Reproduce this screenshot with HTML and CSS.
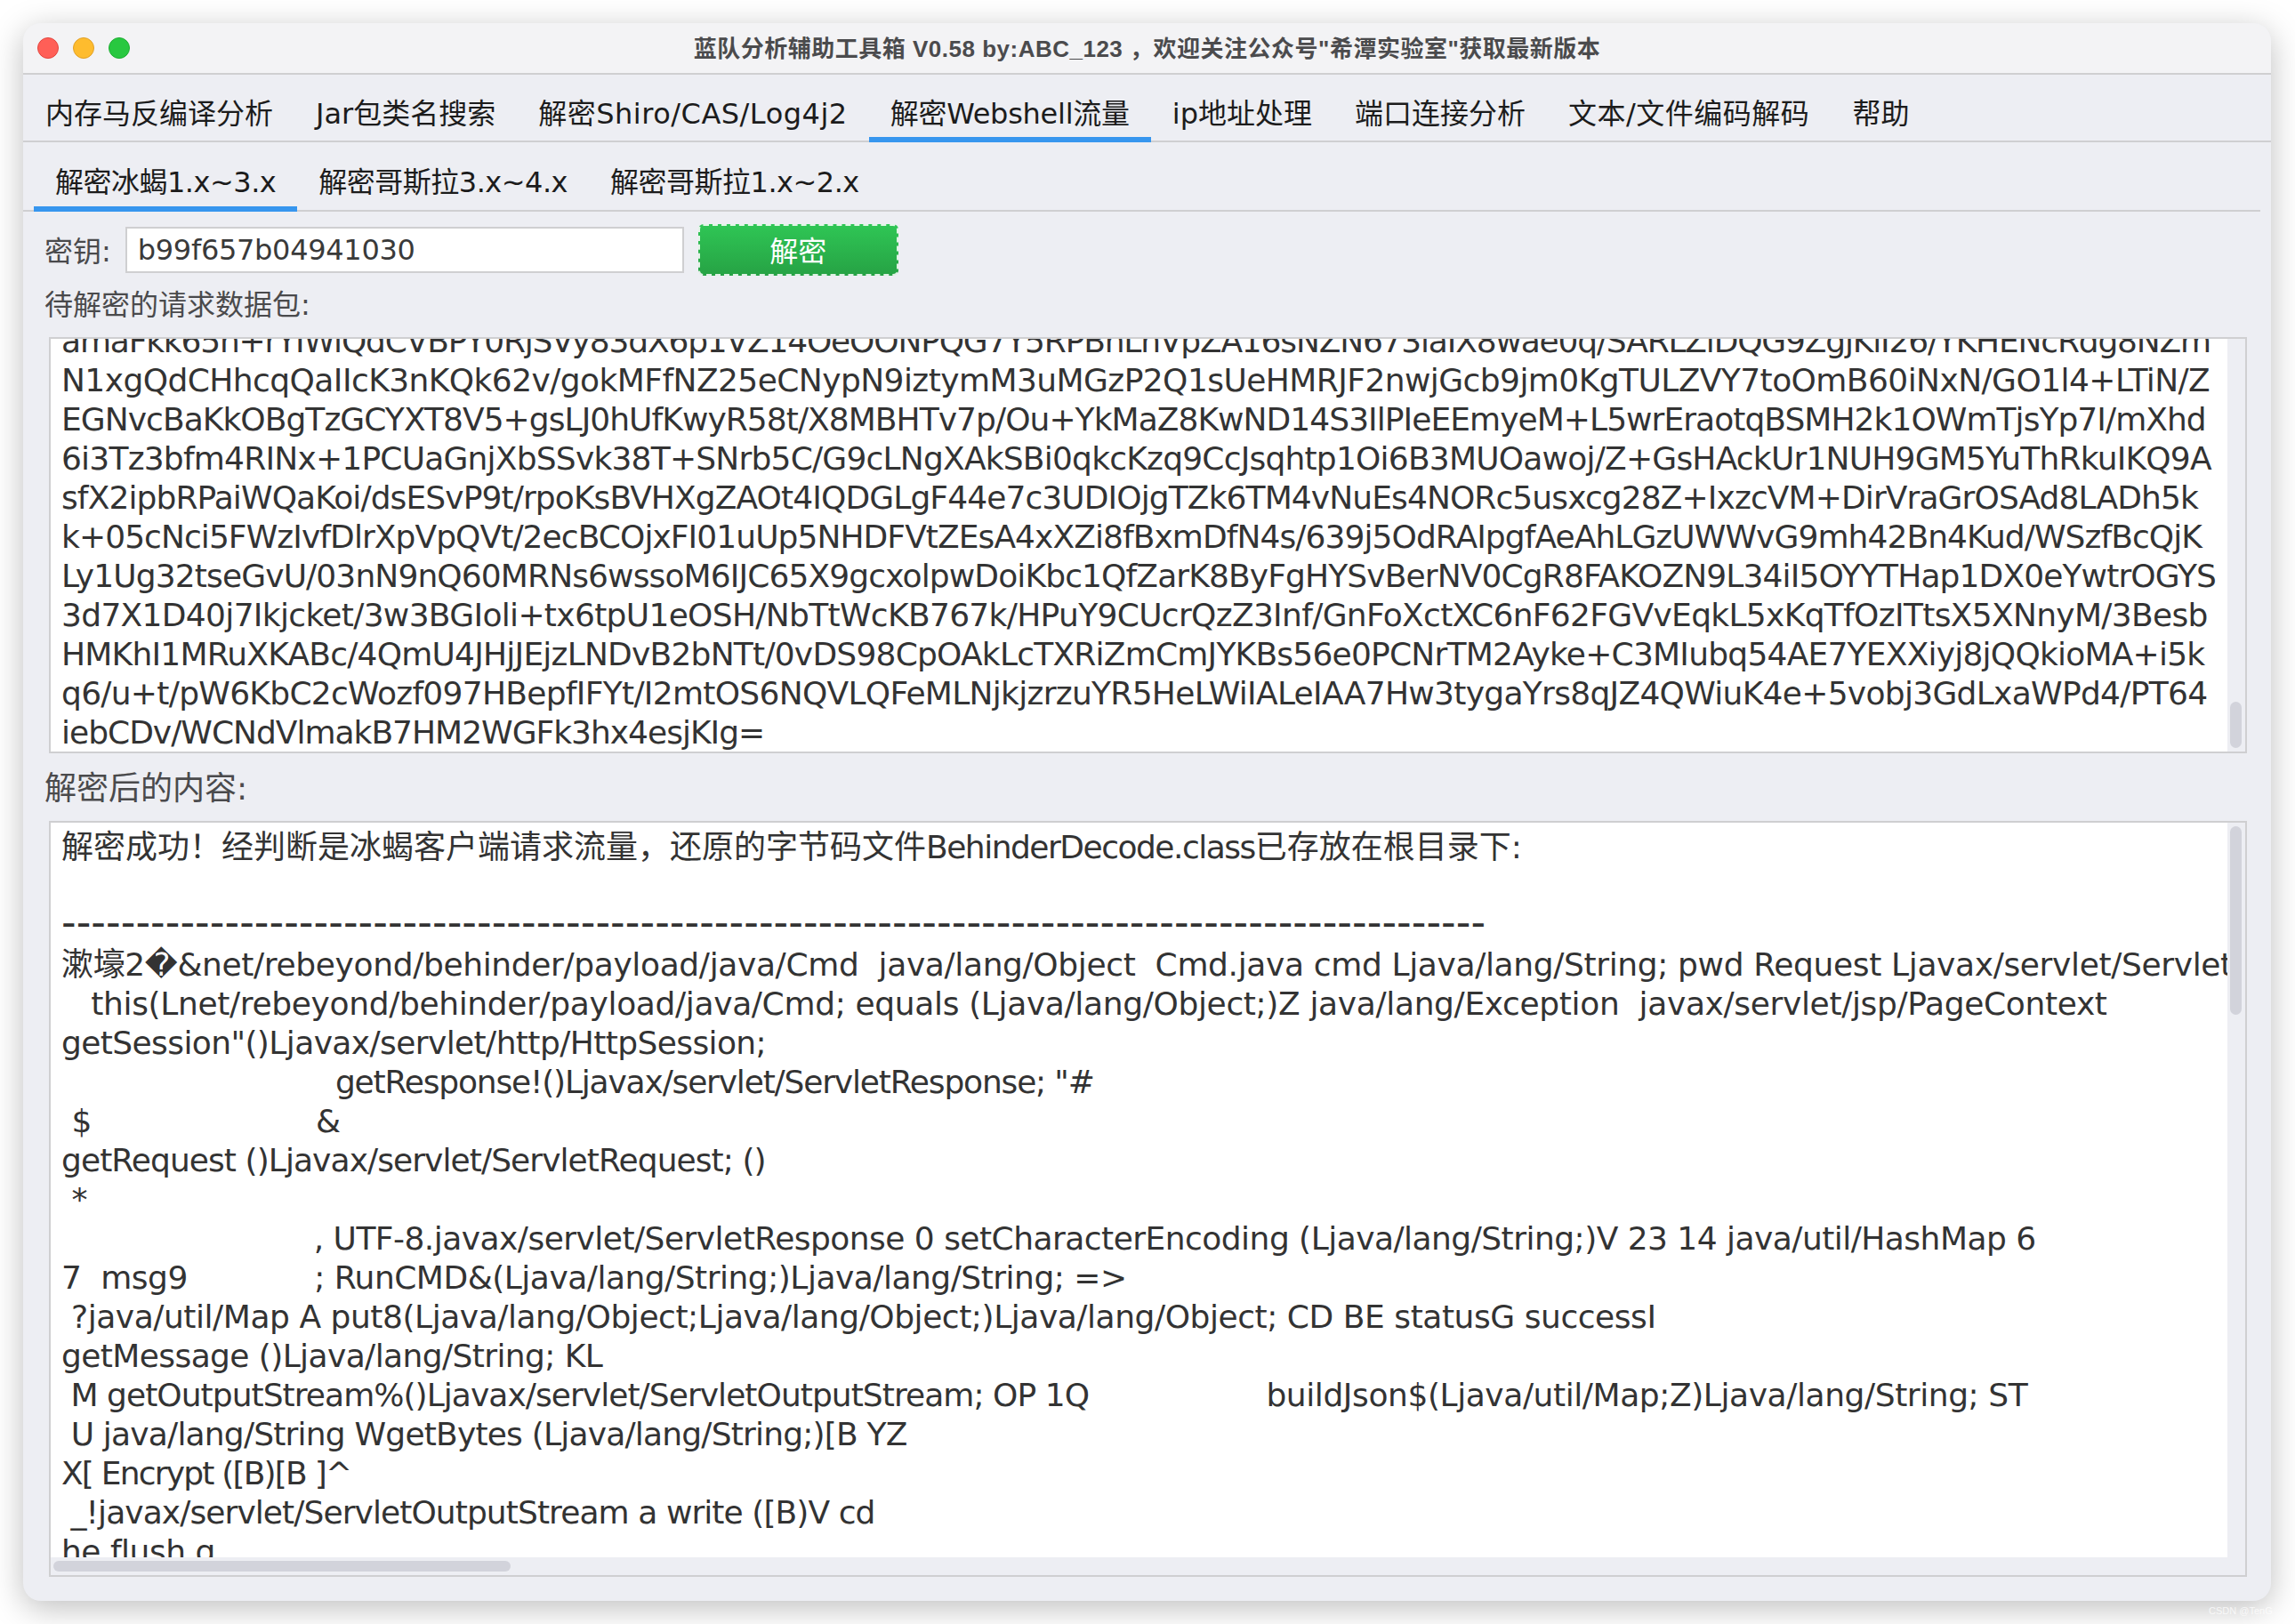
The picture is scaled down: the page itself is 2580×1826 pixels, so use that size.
FILE: index.html
```html
<!DOCTYPE html>
<html lang="zh-CN">
<head>
<meta charset="utf-8">
<title>蓝队分析辅助工具箱</title>
<link rel="stylesheet" href="styles.css">
</head>
<body>
<div class="window">
  <header class="titlebar">
    <div class="lights"><span class="light red"></span><span class="light yellow"></span><span class="light green"></span></div>
    <div class="title">蓝队分析辅助工具箱 V0.58 by:ABC_123 ，欢迎关注公众号"希潭实验室"获取最新版本</div>
  </header>
  <nav class="tabs main-tabs">
    <span class="tab">内存马反编译分析</span>
    <span class="tab">Jar包类名搜索</span>
    <span class="tab tab-wide">解密Shiro/CAS/Log4j2</span>
    <span class="tab tab-narrow active">解密Webshell流量</span>
    <span class="tab">ip地址处理</span>
    <span class="tab">端口连接分析</span>
    <span class="tab tab-wide">文本/文件编码解码</span>
    <span class="tab">帮助</span>
  </nav>
  <nav class="tabs sub-tabs">
    <span class="tab active">解密冰蝎1.x~3.x</span>
    <span class="tab">解密哥斯拉3.x~4.x</span>
    <span class="tab">解密哥斯拉1.x~2.x</span>
  </nav>
  <div class="key-row">
    <label class="label">密钥:</label>
    <div class="input">b99f657b04941030</div>
    <div class="button">解密</div>
  </div>
  <div class="label section-a">待解密的请求数据包:</div>
  <div class="textbox box-a">
    <div class="pane">
      <div class="text text-a">
        <span class="line" style="letter-spacing:-1.18px">amaFkk65n+rYIWiQdCVBPY0RjSVy83dX6p1VZ14OeOONPQG7Y5RPBnLnVpZA16sNZN673iaIX8wae0q/SARLZlDQG9ZgjKiI26/YKHENcRdg8NZm</span>
        <span class="line" style="letter-spacing:-.57px">N1xgQdCHhcqQaIIcK3nKQk62v/gokMFfNZ25eCNypN9iztymM3uMGzP2Q1sUeHMRJF2nwjGcb9jm0KgTULZVY7toOmB60iNxN/GO1l4+LTiN/Z</span>
        <span class="line" style="letter-spacing:-.95px">EGNvcBaKkOBgTzGCYXT8V5+gsLJ0hUfKwyR58t/X8MBHTv7p/Ou+YkMaZ8KwND14S3IlPIeEEmyeM+L5wrEraotqBSMH2k1OWmTjsYp7I/mXhd</span>
        <span class="line" style="letter-spacing:-.79px">6i3Tz3bfm4RINx+1PCUaGnjXbSSvk38T+SNrb5C/G9cLNgXAkSBi0qkcKzq9CcJsqhtp1Oi6B3MUOawoj/Z+GsHAckUr1NUH9GM5YuThRkuIKQ9A</span>
        <span class="line" style="letter-spacing:-.9px">sfX2ipbRPaiWQaKoi/dsESvP9t/rpoKsBVHXgZAOt4IQDGLgF44e7c3UDIOjgTZk6TM4vNuEs4NORc5usxcg28Z+IxzcVM+DirVraGrOSAd8LADh5k</span>
        <span class="line" style="letter-spacing:-.93px">k+05cNci5FWzIvfDlrXpVpQVt/2ecBCOjxFI01uUp5NHDFVtZEsA4xXZi8fBxmDfN4s/639j5OdRAIpgfAeAhLGzUWWvG9mh42Bn4Kud/WSzfBcQjK</span>
        <span class="line" style="letter-spacing:-.88px">Ly1Ug32tseGvU/03nN9nQ60MRNs6wssoM6IJC65X9gcxolpwDoiKbc1QfZarK8ByFgHYSvBerNV0CgR8FAKOZN9L34iI5OYYTHap1DX0eYwtrOGYS</span>
        <span class="line" style="letter-spacing:-.68px">3d7X1D40j7Ikjcket/3w3BGIoli+tx6tpU1eOSH/NbTtWcKB767k/HPuY9CUcrQzZ3Inf/GnFoXctXC6nF62FGVvEqkL5xKqTfOzITtsX5XNnyM/3Besb</span>
        <span class="line" style="letter-spacing:-.78px">HMKhI1MRuXKABc/4QmU4JHjJEjzLNDvB2bNTt/0vDS98CpOAkLcTXRiZmCmJYKBs56e0PCNrTM2Ayke+C3MIubq54AE7YEXXiyj8jQQkioMA+i5k</span>
        <span class="line" style="letter-spacing:-.71px">q6/u+t/pW6KbC2cWozf097HBepfIFYt/I2mtOS6NQVLQFeMLNjkjzrzuYR5HeLWiIALeIAA7Hw3tygaYrs8qJZ4QWiuK4e+5vobj3GdLxaWPd4/PT64</span>
        <span class="line" style="letter-spacing:-1px">iebCDv/WCNdVlmakB7HM2WGFk3hx4esjKIg=</span>
      </div>
    </div>
    <div class="vtrack"><div class="vthumb thumb-a"></div></div>
  </div>
  <div class="label section-b">解密后的内容:</div>
  <div class="textbox box-b">
    <div class="pane">
      <div class="text text-b">
        <span class="line">解密成功！经判断是冰蝎客户端请求流量，还原的字节码文件<span class="tight">BehinderDecode.class</span>已存放在根目录下:</span>
        <span class="line"></span>
        <span class="line"><span class="dash">------------------------------------------------------------------------------------------------</span></span>
        <span class="line" style="letter-spacing:-.36px">漱壕2�&amp;net/rebeyond/behinder/payload/java/Cmd  java/lang/Object  Cmd.java cmd Ljava/lang/String; pwd Request Ljavax/servlet/ServletRequest;</span>
        <span class="line" style="letter-spacing:-.35px">   this(Lnet/rebeyond/behinder/payload/java/Cmd; equals (Ljava/lang/Object;)Z java/lang/Exception  javax/servlet/jsp/PageContext</span>
        <span class="line" style="letter-spacing:-.6px">getSession"()Ljavax/servlet/http/HttpSession;</span>
        <span class="line" style="letter-spacing:-1.18px">                              getResponse!()Ljavax/servlet/ServletResponse; "#</span>
        <span class="line"> $                      &amp;</span>
        <span class="line" style="letter-spacing:-.93px">getRequest ()Ljavax/servlet/ServletRequest; ()</span>
        <span class="line"> *</span>
        <span class="line" style="letter-spacing:-.53px">                          , UTF-8.javax/servlet/ServletResponse 0 setCharacterEncoding (Ljava/lang/String;)V 23 14 java/util/HashMap 6</span>
        <span class="line" style="letter-spacing:-.5px">7  msg9             ; RunCMD&amp;(Ljava/lang/String;)Ljava/lang/String; =&gt;</span>
        <span class="line" style="letter-spacing:-.45px"> ?java/util/Map A put8(Ljava/lang/Object;Ljava/lang/Object;)Ljava/lang/Object; CD BE statusG successI</span>
        <span class="line" style="letter-spacing:-.6px">getMessage ()Ljava/lang/String; KL</span>
        <span class="line" style="letter-spacing:-.95px"> M getOutputStream%()Ljavax/servlet/ServletOutputStream; OP 1Q                   <span style="letter-spacing:-.42px">buildJson$(Ljava/util/Map;Z)Ljava/lang/String; ST</span></span>
        <span class="line" style="letter-spacing:-.8px"> U java/lang/String WgetBytes (Ljava/lang/String;)[B YZ</span>
        <span class="line" style="letter-spacing:-1.8px">X[ Encrypt ([B)[B ]^</span>
        <span class="line" style="letter-spacing:-.92px"> _!javax/servlet/ServletOutputStream a write ([B)V cd</span>
        <span class="line" style="letter-spacing:-.5px">he flush g</span>
      </div>
    </div>
    <div class="vtrack"><div class="vthumb thumb-b"></div></div>
    <div class="htrack"><div class="hthumb"></div></div>
  </div>
</div>
<div class="watermark">CSDN @TenG</div>
</body>
</html>
```
FILE: styles.css
```css
* { box-sizing: border-box; }
html, body { margin: 0; padding: 0; }
body {
  width: 2580px;
  height: 1826px;
  background: #fff;
  padding: 26px 27px 26px 26px;
  overflow: hidden;
  position: relative;
  font-family: "DejaVu Sans", "Noto Sans CJK SC", sans-serif;
  font-size: 32px;
  color: #1e1e1e;
}
.window {
  height: 1774px;
  background: #edeef3;
  border-radius: 20px;
  box-shadow: 0 8px 36px rgba(0, 0, 0, .26);
  overflow: hidden;
  display: flex;
  flex-direction: column;
}
.titlebar {
  height: 58px;
  flex: none;
  background: #f3f3f5;
  border-bottom: 2px solid #cfcfd1;
  display: flex;
  align-items: center;
  justify-content: center;
  padding-bottom: 4px;
  position: relative;
}
.lights {
  position: absolute;
  left: 16px;
  top: 16px;
  display: flex;
  gap: 16px;
}
.light { width: 24px; height: 24px; border-radius: 50%; }
.red { background: #ff5f57; border: 1px solid #e2463f; }
.yellow { background: #febc2e; border: 1px solid #e0a028; }
.green { background: #28c840; border: 1px solid #1fae33; }
.title {
  font-family: "Liberation Sans", "Noto Sans CJK SC", sans-serif;
  font-weight: 700;
  font-size: 26px;
  letter-spacing: .5px;
  color: #4b4b4d;
}
.tabs { display: flex; flex: none; border-bottom: 2px solid #cfcfd1; }
.main-tabs { height: 76px; padding-left: 1px; }
.sub-tabs { height: 78px; padding-left: 12px; margin-right: 12px; }
.sub-tabs .tab { letter-spacing: -.5px; }
.tab {
  padding: 12px 24px 0;
  display: flex;
  align-items: center;
  color: #1c1c1c;
  margin-bottom: -2px;
  border-bottom: 6px solid transparent;
  white-space: nowrap;
}
.tab-wide { letter-spacing: .5px; }
.tab-narrow { letter-spacing: -.25px; }
.tab.active { border-bottom-color: #3796ee; }
.key-row {
  display: flex;
  align-items: center;
  height: 58px;
  margin-top: 14px;
  padding-left: 24px;
  flex: none;
}
.label { color: #4a4a4c; white-space: nowrap; }
.key-row .label { margin-top: -3px; }
.input {
  width: 628px;
  height: 52px;
  margin-left: 16px;
  background: #fff;
  border: 2px solid #cfcfd1;
  padding-left: 12px;
  display: flex;
  align-items: center;
  color: #3a3a3a;
  letter-spacing: -.3px;
}
.button {
  width: 225px;
  height: 58px;
  margin-left: 16px;
  border-radius: 6px;
  border: 2px dashed rgba(255, 255, 255, .85);
  background: linear-gradient(#2fc655, #26a244) border-box;
  color: #fff;
  display: flex;
  align-items: center;
  justify-content: center;
  padding-bottom: 3px;
}
.section-a { margin: 10px 0 0 24px; height: 46px; line-height: 46px; flex: none; }
.section-b { margin: 17px 0 0 24px; height: 45px; line-height: 46px; flex: none; font-size: 36px; }
.textbox {
  margin: 0 27px 0 29px;
  border: 2px solid #cfcfd1;
  background: #edeef3;
  display: grid;
  grid-template-columns: 1fr 20px;
  overflow: hidden;
  flex: none;
}
.box-a { height: 468px; margin-top: 13px; grid-template-rows: 1fr; }
.box-b { height: 850px; margin-top: 14px; grid-template-rows: 1fr 20px; }
.pane { background: #fff; overflow: hidden; min-width: 0; }
.text {
  font-size: 36px;
  line-height: 44px;
  color: #333;
  padding-left: 12px;
}
.line { display: block; min-height: 44px; white-space: pre; }
.text-a { margin-top: -19px; }
.text-b { margin-top: 6px; }
.tight { letter-spacing: -1.5px; }
.dash { font-size: 46px; letter-spacing: .08px; line-height: 0; }
.vtrack { padding: 0 3px; }
.vthumb { width: 13px; background: #d2d3db; border-radius: 7px; }
.thumb-a { height: 52px; margin-top: 408px; }
.thumb-b { height: 212px; margin-top: 4px; }
.htrack { grid-column: 1 / span 2; padding: 4px 0 0 3px; }
.hthumb { width: 514px; height: 12px; background: #d2d3db; border-radius: 6px; }
.watermark {
  position: absolute;
  left: 2483px;
  top: 1804px;
  font-family: "Liberation Sans", sans-serif;
  font-size: 11px;
  line-height: 14px;
  color: rgba(255, 255, 255, .75);
}
```
